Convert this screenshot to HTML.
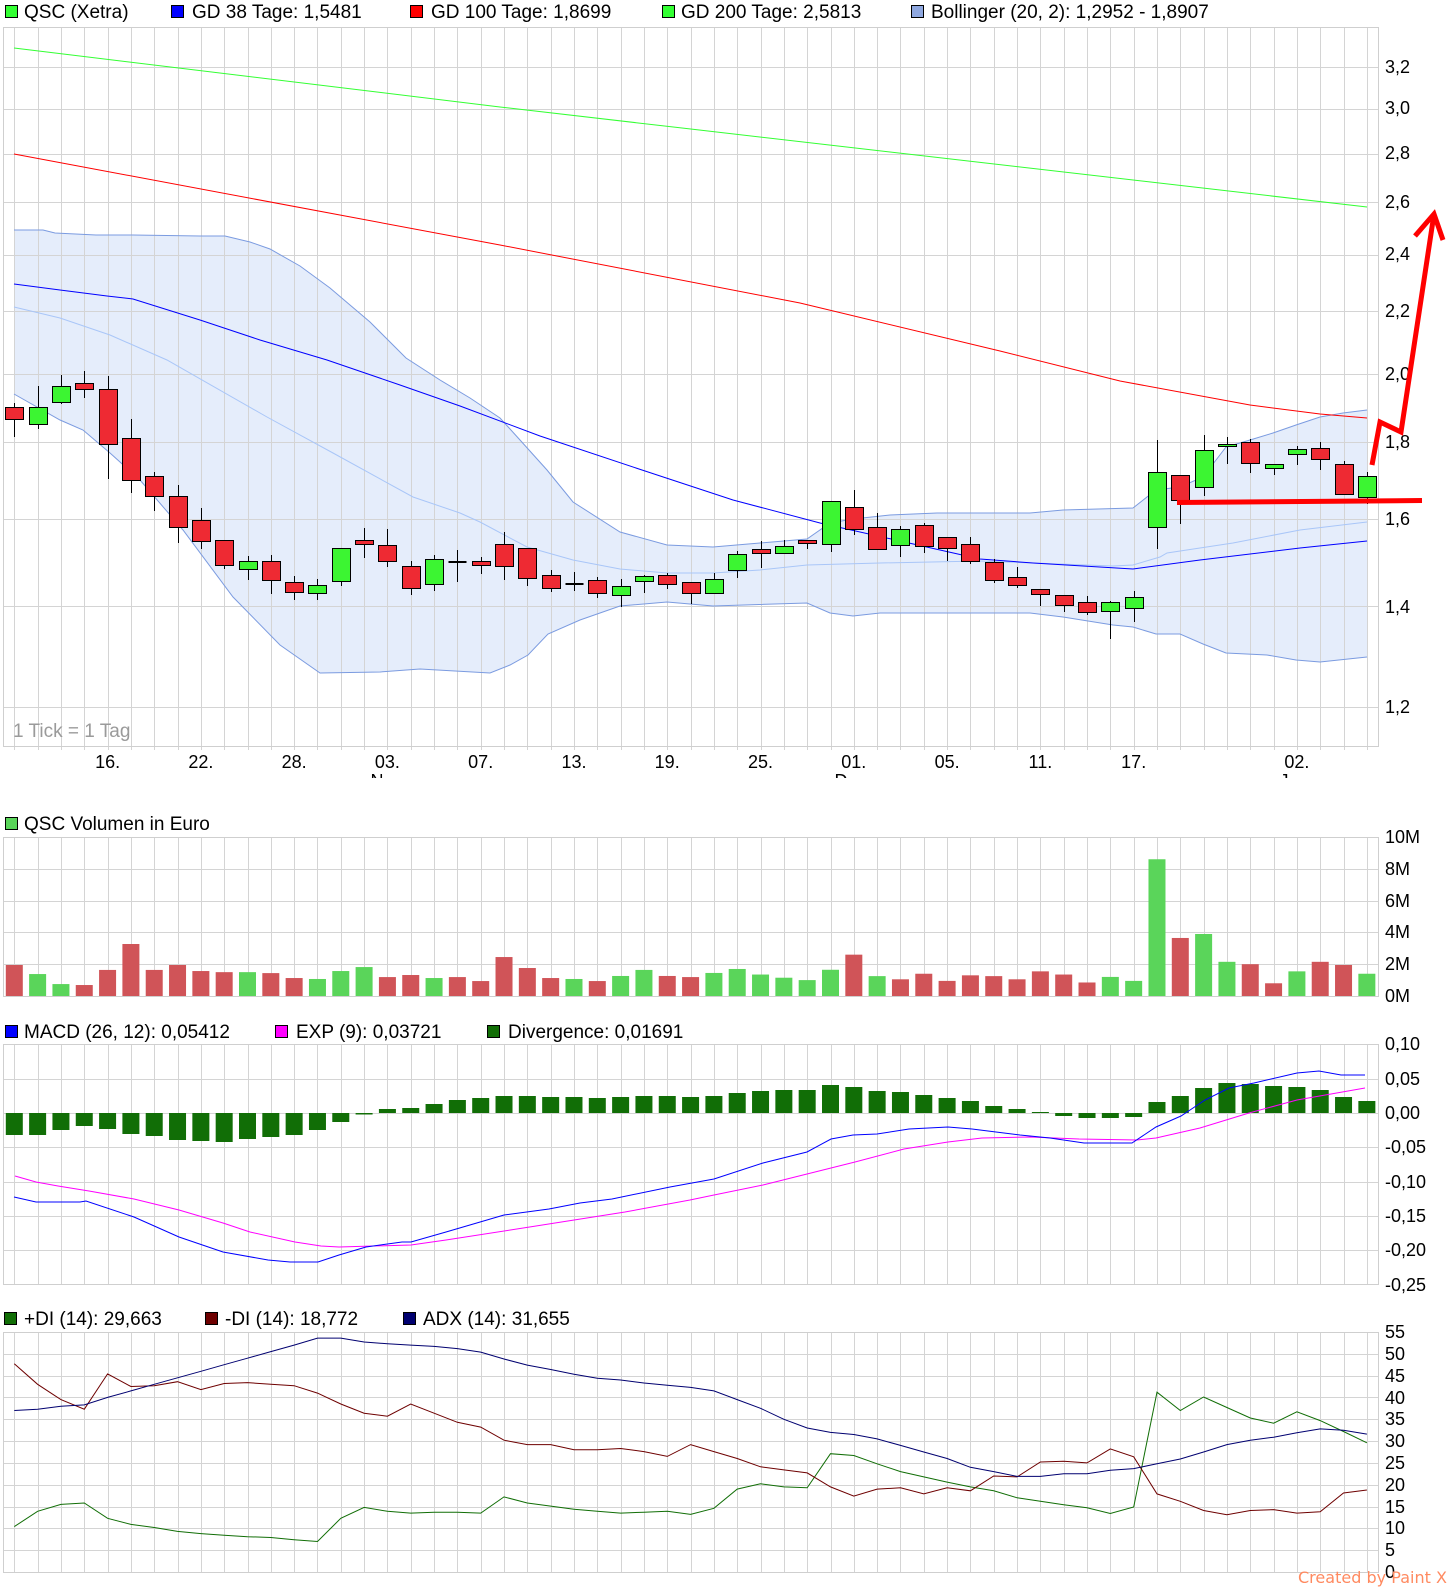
<!DOCTYPE html>
<html><head><meta charset="utf-8"><style>
html,body{margin:0;padding:0;background:#fff;width:1452px;height:1592px;overflow:hidden}
svg{display:block}
text{font-family:"Liberation Sans",Arial,sans-serif;font-size:19px;fill:#000}
.ax{font-size:18px}
</style></head><body>
<svg id="s" width="1452" height="1592" viewBox="0 0 1452 1592" xmlns="http://www.w3.org/2000/svg">
<defs><clipPath id="mc"><rect x="0" y="748" width="1452" height="30"/></clipPath></defs>
<g id="g"></g>
<rect x="5.5" y="5.5" width="12" height="12" fill="#33ff33" stroke="#000"/><text x="24" y="18">QSC (Xetra)</text>
<rect x="171.5" y="5.5" width="12" height="12" fill="#0000ff" stroke="#000"/><text x="192" y="18">GD 38 Tage: 1,5481</text>
<rect x="410.5" y="5.5" width="12" height="12" fill="#ff0000" stroke="#000"/><text x="431" y="18">GD 100 Tage: 1,8699</text>
<rect x="662.5" y="5.5" width="12" height="12" fill="#33ff33" stroke="#000"/><text x="681" y="18">GD 200 Tage: 2,5813</text>
<rect x="911.5" y="5.5" width="12" height="12" fill="#8fa8e0" stroke="#000"/><text x="931" y="18">Bollinger (20, 2): 1,2952 - 1,8907</text>
<text x="13" y="737" style="fill:#9a9a9a">1 Tick = 1 Tag</text>
<g>
<text class="ax" x="1385" y="73">3,2</text><text class="ax" x="1385" y="114">3,0</text><text class="ax" x="1385" y="159">2,8</text><text class="ax" x="1385" y="208">2,6</text><text class="ax" x="1385" y="260">2,4</text><text class="ax" x="1385" y="317">2,2</text><text class="ax" x="1385" y="380">2,0</text><text class="ax" x="1385" y="448">1,8</text><text class="ax" x="1385" y="525">1,6</text><text class="ax" x="1385" y="613">1,4</text><text class="ax" x="1385" y="713">1,2</text>
</g>
<g text-anchor="middle">
<text class="ax" x="107.6" y="768">16.</text><text class="ax" x="200.9" y="768">22.</text><text class="ax" x="294.1" y="768">28.</text><text class="ax" x="387.4" y="768">03.</text><text class="ax" x="480.7" y="768">07.</text><text class="ax" x="574" y="768">13.</text><text class="ax" x="667.2" y="768">19.</text><text class="ax" x="760.5" y="768">25.</text><text class="ax" x="853.8" y="768">01.</text><text class="ax" x="947.1" y="768">05.</text><text class="ax" x="1040.4" y="768">11.</text><text class="ax" x="1133.7" y="768">17.</text><text class="ax" x="1296.9" y="768">02.</text>
<g clip-path="url(#mc)"><text class="ax" x="377" y="787">N</text><text class="ax" x="841" y="787">D</text><text class="ax" x="1284" y="787">J</text></g>
</g>
<rect x="5.5" y="817.5" width="12" height="12" fill="#5ad55a" stroke="#000"/><text x="24" y="830">QSC Volumen in Euro</text>
<text class="ax" x="1385" y="843">10M</text><text class="ax" x="1385" y="875">8M</text><text class="ax" x="1385" y="907">6M</text><text class="ax" x="1385" y="938">4M</text><text class="ax" x="1385" y="970">2M</text><text class="ax" x="1385" y="1002">0M</text>
<rect x="5.5" y="1025.5" width="12" height="12" fill="#0000ff" stroke="#000"/><text x="24" y="1038">MACD (26, 12): 0,05412</text>
<rect x="275.5" y="1025.5" width="12" height="12" fill="#ff00ff" stroke="#000"/><text x="296" y="1038">EXP (9): 0,03721</text>
<rect x="487.5" y="1025.5" width="12" height="12" fill="#116e06" stroke="#000"/><text x="508" y="1038">Divergence: 0,01691</text>
<text class="ax" x="1385" y="1050">0,10</text><text class="ax" x="1385" y="1085">0,05</text><text class="ax" x="1385" y="1119">0,00</text><text class="ax" x="1385" y="1153">-0,05</text><text class="ax" x="1385" y="1188">-0,10</text><text class="ax" x="1385" y="1222">-0,15</text><text class="ax" x="1385" y="1256">-0,20</text><text class="ax" x="1385" y="1291">-0,25</text>
<rect x="4.5" y="1312.5" width="12" height="12" fill="#116e06" stroke="#000"/><text x="24" y="1325">+DI (14): 29,663</text>
<rect x="205.5" y="1312.5" width="12" height="12" fill="#6e0000" stroke="#000"/><text x="225" y="1325">-DI (14): 18,772</text>
<rect x="403.5" y="1312.5" width="12" height="12" fill="#000070" stroke="#000"/><text x="423" y="1325">ADX (14): 31,655</text>
<text class="ax" x="1385" y="1338">55</text><text class="ax" x="1385" y="1360">50</text><text class="ax" x="1385" y="1382">45</text><text class="ax" x="1385" y="1404">40</text><text class="ax" x="1385" y="1425">35</text><text class="ax" x="1385" y="1447">30</text><text class="ax" x="1385" y="1469">25</text><text class="ax" x="1385" y="1491">20</text><text class="ax" x="1385" y="1513">15</text><text class="ax" x="1385" y="1534">10</text><text class="ax" x="1385" y="1556">5</text><text class="ax" x="1385" y="1578">0</text>
<text x="1298" y="1583" style="font-family:'DejaVu Sans',sans-serif;font-size:16px;fill:#ff8a60" textLength="149">Created by Paint X</text>
<g id="top"></g>
</svg>
<script>
var X=function(i){return 14.3+23.32*i};
var h='';
function L(x1,y1,x2,y2,c,w){h+='<line x1="'+x1+'" y1="'+y1+'" x2="'+x2+'" y2="'+y2+'" stroke="'+c+'" stroke-width="'+(w||1)+'"/>';}
function PL(pts,c,w){h+='<polyline fill="none" stroke="'+c+'" stroke-width="'+(w||1)+'" points="'+pts.map(function(p){return p[0]+','+p[1]}).join(' ')+'"/>';}
var G='#d4d4d4';
function panel(y1,y2,hs){
  for(var i=0;i<59;i++){var x=Math.round(X(i))+0.5;L(x,y1,x,y2+(y2<800?4:0),G);}
  hs.forEach(function(y){L(3,Math.round(y)+0.5,1378,Math.round(y)+0.5,G)});
  h+='<rect x="3.5" y="'+(y1+0.5)+'" width="1375" height="'+(y2-y1)+'" fill="none" stroke="#cfcfcf"/>';
}
var P=function(p){return 825.9-652.5*Math.log(p)};
var ph=[3.2,3.0,2.8,2.6,2.4,2.2,2.0,1.8,1.6,1.4,1.2].map(P);
var up=[[14,230],[43,230],[55,233],[96,235],[133,235],[200,236],[225,236],[250,242],[270,249],[300,266],[330,288],[370,322],[406,358],[440,380],[470,398],[500,418],[520,440],[547,470],[573,502],[620,532],[667,545],[713,547],[760,543],[807,539],[830,523],[853,519],[890,515],[937,513],[1030,513],[1063,510],[1133,508],[1156,490],[1180,487],[1203,477],[1226,447],[1250,440],[1273,433],[1296,425],[1320,417],[1343,413],[1367,410]];
var lo=[[14,394],[60,420],[83,430],[110,453],[140,480],[183,530],[233,597],[280,645],[320,673],[380,672],[420,669],[490,673],[510,665],[528,655],[548,634],[580,620],[620,606],[667,602],[713,606],[807,603],[830,613],[853,616],[880,613],[1030,613],[1063,617],[1113,625],[1133,627],[1156,634],[1180,634],[1203,644],[1226,653],[1267,655],[1296,660],[1320,662],[1367,657]];
var mid=[[14,307],[60,318],[110,335],[167,360],[267,417],[333,453],[413,497],[460,513],[480,522],[527,547],[573,560],[620,569],[667,573],[713,573],[760,570],[807,565],[880,563],[980,561],[1113,566],[1133,565],[1160,557],[1167,553],[1233,543],[1300,530],[1367,522]];
h+='<polygon fill="#e5edfb" points="'+up.concat(lo.slice().reverse()).map(function(p){return p[0]+','+p[1]}).join(' ')+'"/>';
panel(27,746,ph);
PL(up,'#7b9be0');PL(lo,'#7b9be0');PL(mid,'#a9c6f8');
PL([[14,48],[500,107],[1367,207]],'#33ff33');
PL([[14,154],[500,245],[800,303],[1000,351],[1120,381],[1250,405],[1320,414],[1367,418]],'#ff0000');
PL([[14,284],[60,290],[107,296],[133,299],[200,320],[260,340],[327,360],[400,385],[460,406],[540,436],[642,470],[733,500],[820,523],[900,541],[980,559],[1033,563],[1133,569],[1200,560],[1300,548],[1367,541]],'#0000ff');
var C=[[0,407,419,403,437,0],[1,407,424,386,429,1],[2,386,402,375,404,1],[3,383,389,371,398,0],[4,389,444,376,479,0],[5,438,480,419,493,0],[6,476,496,472,511,0],[7,496,527,485,543,0],[8,520,541,508,549,0],[9,540,565,540,569,0],[10,561,569,556,580,1],[11,561,580,555,594,0],[12,582,592,576,600,0],[13,585,593,579,600,1],[14,548,581,548,586,1],[15,540,544,528,558,0],[16,545,561,529,567,0],[17,566,588,561,595,0],[18,559,584,555,591,1],[19,562,562,550,582,2],[20,561,565,557,574,0],[21,544,566,532,580,0],[22,548,578,548,586,0],[23,575,588,570,592,0],[24,584,584,572,591,2],[25,580,593,577,598,0],[26,586,595,579,607,1],[27,576,581,575,593,1],[28,575,584,573,589,0],[29,582,593,582,604,0],[30,579,593,573,594,1],[31,554,570,551,578,1],[32,549,553,541,568,0],[33,546,553,540,554,1],[34,540,543,540,549,0],[35,501,544,501,552,1],[36,507,529,490,535,0],[37,527,549,513,550,0],[38,529,545,526,557,1],[39,525,546,523,553,0],[40,537,548,537,561,0],[41,544,561,537,564,0],[42,562,580,559,583,0],[43,577,585,567,588,0],[44,589,594,589,606,0],[45,595,605,595,612,0],[46,602,612,596,615,0],[47,602,611,601,639,1],[48,597,608,591,622,1],[49,472,527,440,549,1],[50,475,500,475,524,0],[51,450,487,435,496,1],[52,444,446,437,464,1],[53,442,463,439,473,0],[54,464,468,464,475,1],[55,449,454,446,465,1],[56,448,459,442,470,0],[57,464,494,461,495,0],[58,476,497,472,504,1]];
C.forEach(function(c){var x=Math.round(X(c[0]))+0.5;L(x,c[3],x,c[4],'#000');
 if(c[5]==2){L(x-9,c[1],x+9,c[1],'#000',2);}
 else h+='<rect x="'+(x-9)+'" y="'+(c[1]+0.5)+'" width="18" height="'+Math.max(c[2]-c[1],2)+'" fill="'+(c[5]?'#3cf532':'#ee2a33')+'" stroke="#000"/>';});
panel(837,996,[837,869,901,932,964,996]);
var V=[[1.95,0],[1.38,1],[0.75,1],[0.69,0],[1.64,0],[3.27,0],[1.64,0],[1.95,0],[1.57,0],[1.5,0],[1.5,1],[1.44,0],[1.13,0],[1.07,1],[1.57,1],[1.82,1],[1.19,0],[1.32,0],[1.13,1],[1.19,0],[0.94,0],[2.45,0],[1.76,0],[1.13,0],[1.07,1],[0.94,0],[1.26,1],[1.64,1],[1.26,0],[1.19,0],[1.45,1],[1.7,1],[1.35,1],[1.15,1],[1.0,1],[1.65,1],[2.6,0],[1.25,1],[1.05,0],[1.4,0],[0.95,0],[1.3,0],[1.25,0],[1.05,0],[1.55,0],[1.35,0],[0.85,0],[1.2,1],[0.95,1],[8.6,1],[3.65,0],[3.9,1],[2.15,1],[2.0,0],[0.8,0],[1.55,1],[2.15,0],[1.95,0],[1.4,1]];
V.forEach(function(v,i){var hh=v[0]*15.9;h+='<rect x="'+(X(i)-8.5)+'" y="'+(996-hh)+'" width="17" height="'+hh+'" fill="'+(v[1]?'#5ad55a':'#d05458')+'"/>';});
panel(1044,1284,[1044,1078.6,1113,1147.3,1181.6,1216,1250,1284]);
var D=[1135,1135,1130,1126,1129,1134,1136,1140,1141,1142,1139,1137,1135,1130,1122,1114.5,1109,1108,1104,1100,1098,1096,1096,1097,1097,1098,1097,1096,1096,1097,1096,1093,1091,1090,1090,1085,1087,1091,1092,1095,1098,1101,1106,1109,1112,1116,1118,1118,1117,1102,1096,1088,1083,1084,1086,1087,1090,1097,1101];
D.forEach(function(y,i){var t=Math.min(y,1113),b=Math.max(y,1113);if(b-t<1){t=1112.5;b=1114;}h+='<rect x="'+(X(i)-8.5)+'" y="'+t+'" width="17" height="'+(b-t)+'" fill="#116e06"/>';});
PL([[15,1176],[36,1182],[58,1186],[89,1191],[134,1199],[179,1210],[223,1223],[250,1232],[295,1242],[321,1246],[339,1247],[411,1245],[446,1240],[536,1226],[625,1212],[690,1200],[714,1195],[763,1185],[831,1168],[855,1162],[904,1149],[948,1142],[982,1138],[1030,1137],[1079,1139],[1137,1140],[1156,1138],[1200,1128],[1249,1113],[1297,1100],[1365,1088]],'#ff00ff');
PL([[14,1197],[36,1202],[80,1202],[86,1201],[134,1217],[179,1237],[223,1252],[268,1260],[290,1262],[318,1262],[339,1255],[366,1247],[402,1242],[411,1242],[446,1232],[504,1215],[549,1209],[580,1203],[612,1199],[670,1187],[714,1179],[763,1163],[807,1152],[831,1139],[853,1135],[877,1134],[909,1129],[948,1127],[972,1129],[1020,1135],[1050,1138],[1084,1143],[1132,1143],[1156,1127],[1181,1116],[1205,1100],[1229,1088],[1254,1083],[1297,1073],[1319,1071],[1341,1075],[1365,1075]],'#0000ff');
var dh=[];for(var k=0;k<12;k++)dh.push(1332+k*240/11);
panel(1332,1572,dh);
var DY=function(v){return 1572-v*4.364};
var pdi=[10.4,13.9,15.5,15.8,12.3,10.9,10.2,9.3,8.8,8.4,8.1,7.9,7.4,7,12.3,14.8,13.9,13.5,13.7,13.7,13.5,17.2,15.8,15.1,14.4,13.9,13.5,13.7,13.9,13.2,14.6,19,20.2,19.5,19.3,27.1,26.7,24.8,23,21.8,20.6,19.5,18.6,17,16.2,15.4,14.7,13.4,14.9,41.2,37,40.1,37.7,35.3,34.1,36.7,34.7,32.2,29.6];
var mdi=[47.7,43,39.5,37.3,45.4,42.5,42.7,43.6,41.8,43.2,43.4,43,42.7,41,38.5,36.4,35.7,38.5,36.4,34.3,33.2,30.2,29.2,29.2,28,28,28.3,27.6,26.5,29.2,27.6,26,24.1,23.4,22.7,19.5,17.4,19,19.3,17.9,19.3,18.6,22,21.8,25.2,25.4,25,28.2,26.4,17.9,16.2,14.1,13.1,14.1,14.3,13.5,13.8,18.1,18.8];
var adx=[37,37.3,38,38.3,40,41.5,43,44.5,46,47.5,49,50.5,52,53.6,53.6,52.7,52.3,52,51.7,51.2,50.4,48.8,47.4,46.4,45.3,44.4,44,43.3,42.8,42.3,41.5,39.5,37.5,35,33,32,31.5,30.5,29,27.5,26,24,23,21.9,21.9,22.5,22.5,23.3,23.7,24.8,25.9,27.5,29.2,30.2,30.9,31.9,32.8,32.5,31.6];
function arr(a){return a.map(function(v,i){return [X(i).toFixed(1),DY(v).toFixed(1)]})}
PL(arr(pdi),'#116e06');PL(arr(mdi),'#6e0000');PL(arr(adx),'#000070');
document.getElementById('g').innerHTML=h;
document.getElementById('top').innerHTML='<line x1="1177" y1="502.5" x2="1422" y2="500.5" stroke="#ff0000" stroke-width="5"/><polyline fill="none" stroke="#ff0000" stroke-width="5" stroke-linejoin="miter" points="1372,465 1380,422 1401,432 1434,214"/><polyline fill="none" stroke="#ff0000" stroke-width="5" points="1415,236 1434,214 1443,240"/>';
</script>
</body></html>
